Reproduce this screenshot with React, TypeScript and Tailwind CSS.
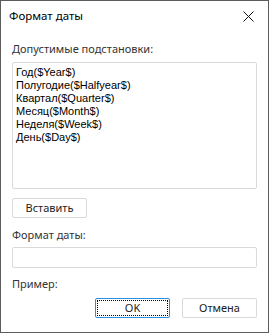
import React from "react";

const F = { fontFamily: '"Noto Sans", "Open Sans", sans-serif' };
const M = { fontFamily: '"Liberation Sans", Arial, sans-serif' };

export default function App() {
  return (
    <div
      className="w-[269px] h-[333px] bg-white border border-[#5c5c5c] flex flex-col text-[11px] text-[#1a1a1a]"
      style={F}
    >
      <div className="h-[30px] flex items-center justify-between pl-[8px] pr-[14px]">
        <span className="text-[11.5px] text-black leading-none">Формат даты</span>
        <svg width="11" height="11" viewBox="0 0 11 11" className="block">
          <path d="M0.5 0.5 L10.5 10.5 M10.5 0.5 L0.5 10.5" stroke="#111" strokeWidth="1" />
        </svg>
      </div>
      <div className="flex flex-col px-[11px]">
        <div className="mt-[11px] h-[14px] leading-[14px] text-[#333]">Допустимые подстановки:</div>
        <div
          className="mt-[6px] h-[127px] border border-[#d9d9d9] rounded-[2px] px-[3px] pt-[3px] text-black text-[11px] leading-[13px]"
          style={M}
        >
          <div>Год($Year$)</div>
          <div>Полугодие($Halfyear$)</div>
          <div>Квартал($Quarter$)</div>
          <div>Месяц($Month$)</div>
          <div>Неделя($Week$)</div>
          <div>День($Day$)</div>
        </div>
        <div className="mt-[9px] w-[75px] h-[20px] border border-[#d9d9d9] rounded-[2px] flex items-center justify-center text-[#222]">
          Вставить
        </div>
        <div className="mt-[10px] h-[14px] leading-[14px] text-[#333]">Формат даты:</div>
        <div className="mt-[5px] h-[21px] border border-[#d9d9d9] rounded-[2px]" />
        <div className="mt-[9px] h-[14px] leading-[14px] text-[#333]">Пример:</div>
        <div className="mt-[7px] flex justify-end gap-[12px]">
          <div className="w-[75px] h-[20px] border border-[#2a8ee0] rounded-[2px] p-[1px]">
            <div className="w-full h-full border border-dotted border-black flex items-center justify-center text-[#222]">
              OK
            </div>
          </div>
          <div className="w-[75px] h-[20px] border border-[#d9d9d9] rounded-[2px] flex items-center justify-center text-[#222]">
            Отмена
          </div>
        </div>
      </div>
    </div>
  );
}
